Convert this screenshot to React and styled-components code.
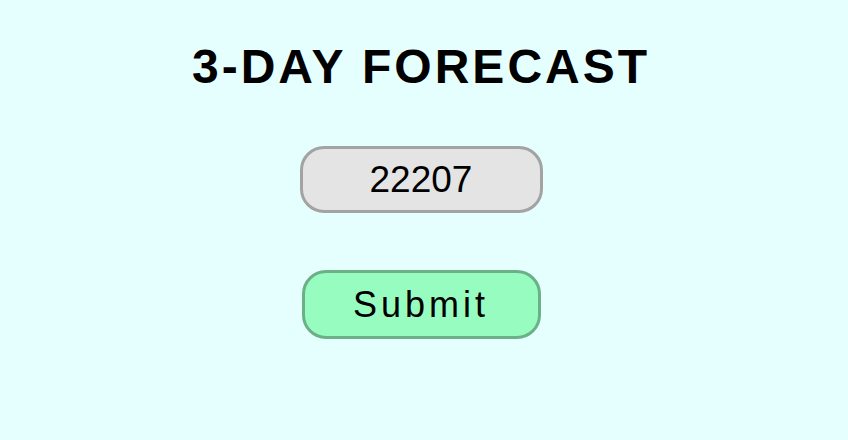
import React from "react"
import styled, { createGlobalStyle } from "styled-components"

const Global = createGlobalStyle`
  html, body {
    margin: 0;
    height: 100%;
    background-color: #e5ffff;
    font-family: "Liberation Sans", Arial, sans-serif;
  }
  #root {
    min-height: 100%;
  }
`

const Page = styled.div`
  display: flex;
  flex-direction: column;
  align-items: center;
  padding-top: 37px;
  padding-right: 6px;
`

const Title = styled.h1`
  margin: 0;
  font-size: 48px;
  font-weight: bold;
  letter-spacing: 3px;
  color: #000;
  line-height: 60px;
`

const Form = styled.form`
  display: flex;
  flex-direction: column;
  align-items: center;
  gap: 57px;
  margin-top: 49px;
`

const Zip = styled.input`
  box-sizing: border-box;
  width: 243px;
  height: 67px;
  border: 3px solid #a3a3a3;
  border-radius: 24px;
  background-color: #e4e4e4;
  font-family: "Liberation Sans", Arial, sans-serif;
  font-size: 37px;
  text-align: center;
  color: #000;
  outline: none;
`

const Button = styled.button`
  box-sizing: border-box;
  width: 239px;
  height: 69px;
  border: 3px solid #6bb087;
  border-radius: 24px;
  background-color: #97fcc0;
  font-family: "Liberation Sans", Arial, sans-serif;
  font-size: 36px;
  letter-spacing: 4px;
  color: #000;
  cursor: pointer;
`

export default () => (
  <Page>
    <Global />
    <Title>3-DAY FORECAST</Title>
    <Form onSubmit={e => e.preventDefault()}>
      <Zip defaultValue="22207" />
      <Button type="submit">Submit</Button>
    </Form>
  </Page>
)
